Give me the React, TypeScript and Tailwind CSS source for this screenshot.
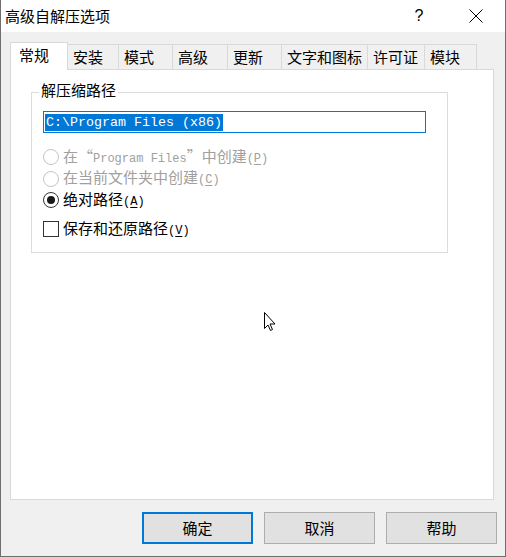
import React from "react";

const cjk = "font-['Noto_Sans_CJK_SC','Noto_Sans',sans-serif]";
const mono = "font-['Liberation_Mono','Noto_Sans_CJK_SC',monospace]";

const tabs = [
  { label: "安装", w: "w-[51px]" },
  { label: "模式", w: "w-[54px]" },
  { label: "高级", w: "w-[55px]" },
  { label: "更新", w: "w-[54px]" },
  { label: "文字和图标", w: "w-[86px]" },
  { label: "许可证", w: "w-[57px]" },
  { label: "模块", w: "w-[52px]" },
];

const Hotkey = ({ k }: { k: string }) => (
  <span className="font-['Liberation_Mono',monospace] text-[12px]">
    (<span className="underline underline-offset-2">{k}</span>)
  </span>
);

const Radio = ({
  checked,
  disabled,
  h = "h-[22px]",
  children,
}: {
  checked?: boolean;
  disabled?: boolean;
  h?: string;
  children: React.ReactNode;
}) => (
  <div className={`flex items-center ${h}`}>
    <span
      className={`w-[16px] h-[16px] rounded-full border bg-white flex items-center justify-center ${
        disabled ? "border-[#c4c4c4]" : "border-[#333333]"
      }`}
    >
      {checked && <span className="w-[8px] h-[8px] rounded-full bg-[#1a1a1a]" />}
    </span>
    <span
      className={`ml-[4px] leading-[20px] ${
        disabled ? "text-[#a0a0a0]" : "text-[#000000]"
      }`}
    >
      {children}
    </span>
  </div>
);

export default function App() {
  return (
    <div
      className={`relative w-[506px] h-[557px] bg-[#f0f0f0] border-l border-r border-b border-[#6e6e6e] flex flex-col text-[15px] text-black ${cjk}`}
    >
      {/* Title bar */}
      <div className="h-[32px] bg-white flex items-center pr-[6px]">
        <span className="pl-[4px] leading-[20px]">高级自解压选项</span>
        <div className="ml-auto w-[46px] flex justify-center text-[16px] leading-[20px] font-['Liberation_Sans',sans-serif]">
          ?
        </div>
        <div className="ml-[11px] w-[46px] flex justify-center">
          <svg width="14" height="14" viewBox="0 0 14 14">
            <path d="M0.5 0.5 L13.5 13.5 M13.5 0.5 L0.5 13.5" stroke="#000" strokeWidth="1" />
          </svg>
        </div>
      </div>

      {/* Body */}
      <div className="flex-1 flex flex-col pl-[9px] pr-[8px]">
        {/* Tabs */}
        <div className="mt-[10px] h-[27px] flex items-end">
          <div className="relative z-10 -mb-px w-[58px] h-[28px] bg-white border-t border-l border-r border-[#d9d9d9] flex items-center pl-[8px] pb-[3px] leading-[20px]">
            常规
          </div>
          {tabs.map((t) => (
            <div
              key={t.label}
              className={`${t.w} h-[25px] border-t border-r border-[#d9d9d9] bg-[#f0f0f0] flex items-center pl-[5px] leading-[20px] whitespace-nowrap`}
            >
              {t.label}
            </div>
          ))}
        </div>

        {/* Panel */}
        <div className="w-[484px] h-[431px] bg-white border border-[#d9d9d9] pl-[20px] pt-[12px]">
          <fieldset className="w-[417px] h-[171px] border border-[#dcdcdc] pl-[11px]">
            <legend className="ml-[-4px] px-[2px] leading-[20px]">
              <span className="relative -top-[2px]">解压缩路径</span>
            </legend>
            <div className="mt-[9px] w-[383px] h-[22px] border border-[#0078d7] bg-white pl-[1px] flex items-center">
              <span
                className={`bg-[#0078d7] text-white text-[13.33px] leading-[17px] px-[1px] ${mono}`}
              >
                C:\Program Files (x86)
              </span>
            </div>
            <div className="mt-[13px] flex flex-col">
              <Radio disabled>
                在“<span className="font-['Liberation_Mono',monospace] text-[12px]">Program Files</span>”中创建
                <Hotkey k="P" />
              </Radio>
              <Radio disabled h="h-[21px]">
                在当前文件夹中创建
                <Hotkey k="C" />
              </Radio>
              <Radio checked>
                绝对路径
                <Hotkey k="A" />
              </Radio>
              <div className="mt-[7px] flex items-center h-[22px]">
                <span className="w-[16px] h-[16px] border border-[#333333] bg-white" />
                <span className="ml-[4px] leading-[20px]">
                  保存和还原路径
                  <Hotkey k="V" />
                </span>
              </div>
            </div>
          </fieldset>
        </div>

        {/* Buttons */}
        <div className="mt-[12px] flex justify-end gap-[11px]">
          <button className="w-[111px] h-[32px] bg-[#e1e1e1] border-2 border-[#0078d7] leading-[20px]">
            确定
          </button>
          <button className="w-[111px] h-[32px] bg-[#e1e1e1] border border-[#adadad] leading-[20px]">
            取消
          </button>
          <button className="w-[111px] h-[32px] bg-[#e1e1e1] border border-[#adadad] leading-[20px]">
            帮助
          </button>
        </div>
      </div>

      {/* Mouse pointer */}
      <svg
        className="absolute left-[262px] top-[311px]"
        width="14"
        height="22"
        viewBox="0 0 14 22"
      >
        <path
          d="M1.5 1.5 L1.5 17.5 L5 14 L7.5 19.5 L9.5 18.5 L7 13 L12 13 Z"
          fill="#fff"
          stroke="#000"
          strokeWidth="1"
          strokeLinejoin="miter"
        />
      </svg>
    </div>
  );
}
